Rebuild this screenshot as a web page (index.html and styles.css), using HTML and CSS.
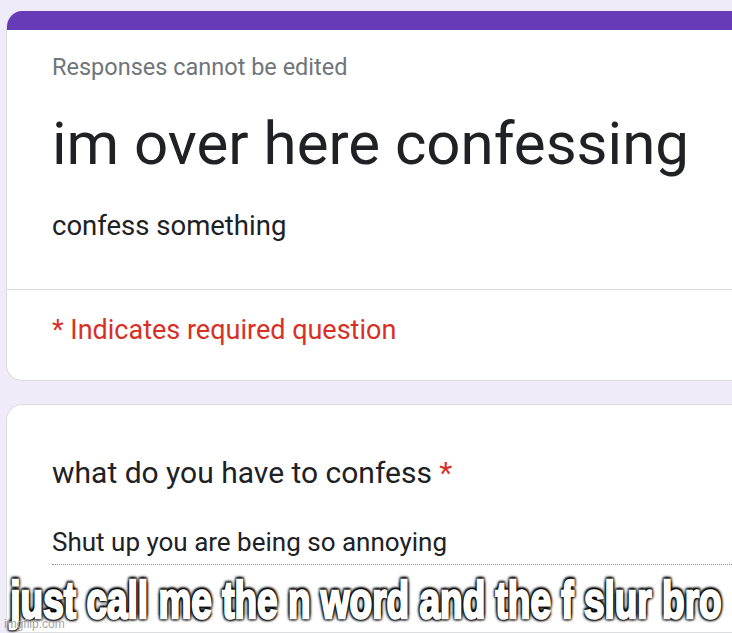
FILE: index.html
```html
<!DOCTYPE html>
<html lang="en">
<head>
<meta charset="utf-8">
<title>im over here confessing</title>
<link rel="stylesheet" href="styles.css">
</head>
<body>
<main class="page">
  <section class="card card-header">
    <div class="accent"></div>
    <div class="header-body">
      <p class="note">Responses cannot be edited</p>
      <h1 class="title">im over here confessing</h1>
      <p class="desc">confess something</p>
    </div>
    <div class="divider"></div>
    <p class="required">* Indicates required question</p>
  </section>
  <section class="card card-question">
    <p class="question">what do you have to confess <span class="star">*</span></p>
    <p class="answer">Shut up you are being so annoying</p>
  </section>
</main>
<div class="caption"><span class="caption-text">just call me the n word and the f slur bro</span></div>
<div class="watermark">imgflip.com</div>
</body>
</html>
```
FILE: styles.css
```css
html, body {
  margin: 0;
  padding: 0;
}
body {
  width: 732px;
  height: 633px;
  overflow: hidden;
  background: #efebf8;
  font-family: Roboto, "Noto Sans", sans-serif;
  color: #202124;
  position: relative;
}
.page {
  padding: 11px 0 0 6px;
  display: flex;
  flex-direction: column;
  gap: 23px;
}
.card {
  background: #fff;
  border: 1px solid #dadce0;
  border-right: none;
  border-radius: 16px 0 0 16px;
  box-sizing: border-box;
}
.card-header {
  border-top: none;
  overflow: hidden;
  height: 370px;
}
.accent {
  height: 19px;
  background: #673ab7;
}
.header-body {
  padding: 23px 0 0 45px;
}
.note {
  margin: 0;
  font-size: 23.5px;
  line-height: 28px;
  color: #70757a;
}
.title {
  margin: 27px 0 0;
  font-size: 60px;
  font-weight: 400;
  line-height: 72px;
  color: #202124;
  white-space: nowrap;
}
.desc {
  margin: 30px 0 0;
  font-size: 27.5px;
  line-height: 32px;
}
.divider {
  height: 1px;
  background: #dadce0;
  margin-top: 47px;
}
.required {
  margin: 24px 0 0 45px;
  font-size: 27px;
  line-height: 32px;
  color: #d93025;
}
.card-question {
  height: 229px;
  padding: 50px 0 0 45px;
}
.question {
  margin: 0;
  font-size: 30px;
  line-height: 36px;
}
.star {
  color: #d93025;
}
.answer {
  margin: 36px 0 0;
  font-size: 26px;
  line-height: 30px;
  padding-bottom: 7px;
  border-bottom: 1px dotted #8d9196;
}
.caption {
  position: absolute;
  left: 0;
  top: 580px;
  width: 732px;
  display: flex;
  justify-content: center;
  white-space: nowrap;
}
.caption-text {
  font-family: "Liberation Sans", Arial, sans-serif;
  font-weight: 700;
  font-size: 37px;
  line-height: 42px;
  color: #fff;
  -webkit-text-stroke: 1.8px #fff;
  transform: scaleY(1.38);
  text-shadow:
    0 0 1px #000, 0 0 2px #000, 0 0 3px #000, 0 0 4px #000,
    1.5px 1.5px 2px #000, -1.5px -1.5px 2px #000, 1.5px -1.5px 2px #000, -1.5px 1.5px 2px #000;
}
.watermark {
  position: absolute;
  left: 4px;
  top: 617px;
  font-family: "Liberation Sans", Arial, sans-serif;
  font-size: 12px;
  line-height: 14px;
  color: #a3a3a3;
}
```
